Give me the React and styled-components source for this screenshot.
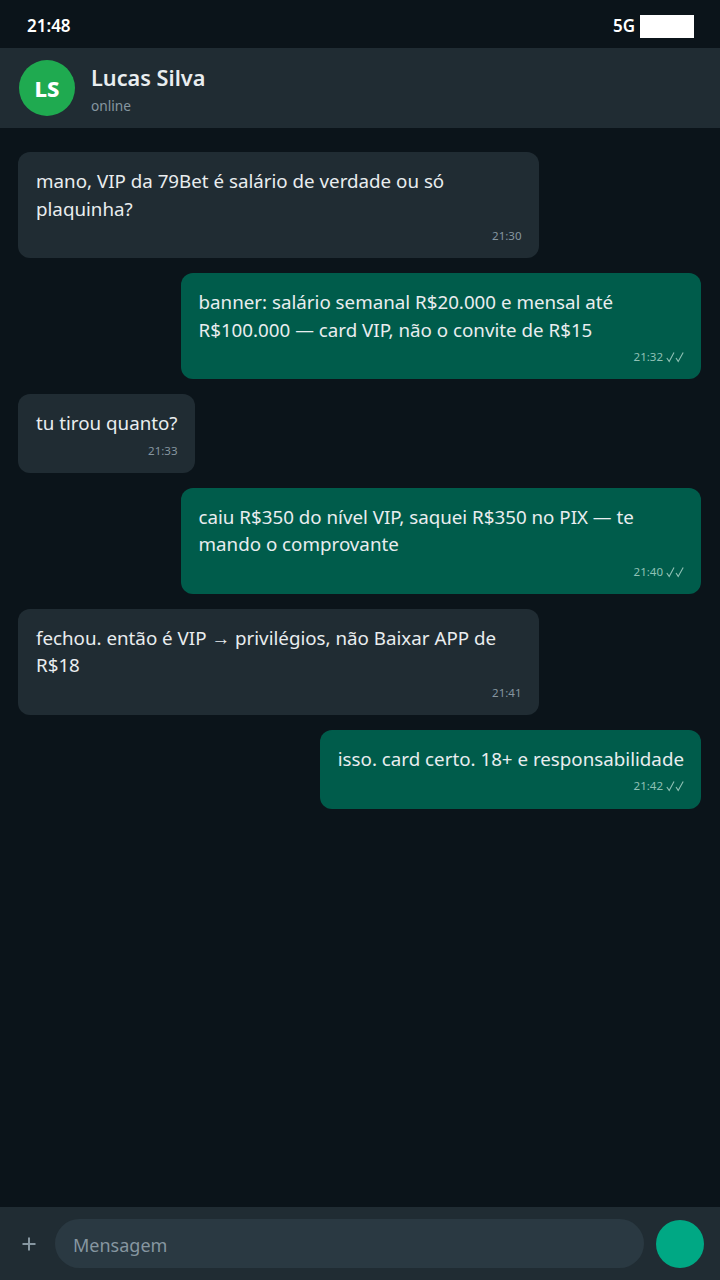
import styled, { createGlobalStyle } from "styled-components";

const Global = createGlobalStyle`
  html, body { margin: 0; padding: 0; background: #0b141a; }
  * { box-sizing: border-box; }
`;

const Screen = styled.div`
  width: 720px;
  height: 1280px;
  display: flex;
  flex-direction: column;
  background: #0b141a;
  color: #e9edef;
  font-family: "Noto Sans", "Open Sans", sans-serif;
  overflow: hidden;
`;

const StatusBar = styled.div`
  height: 48px;
  flex: none;
  display: flex;
  align-items: center;
  justify-content: space-between;
  padding: 3px 26px 0 27px;
  color: #fff;
  font-size: 17px;
  font-weight: 600;
`;

const StatusRight = styled.div`
  display: flex;
  align-items: center;
  gap: 5px;
`;

const Battery = styled.div`
  width: 54px;
  height: 23px;
  margin-top: 1px;
  background: #fff;
`;

const Header = styled.header`
  height: 80px;
  flex: none;
  display: flex;
  align-items: center;
  gap: 16px;
  padding: 0 19px;
  background: #202c33;
`;

const Avatar = styled.div`
  width: 56px;
  height: 56px;
  border-radius: 50%;
  background: #1faa50;
  color: #fff;
  display: flex;
  align-items: center;
  justify-content: center;
  font-size: 22px;
  font-weight: 800;
`;

const Name = styled.div`
  font-size: 21.7px;
  font-weight: 600;
  line-height: 28px;
  margin-top: 2px;
`;

const Presence = styled.div`
  font-size: 13.7px;
  line-height: 19px;
  margin-top: 4px;
  color: #8696a0;
`;

const Messages = styled.main`
  flex: 1;
  display: flex;
  flex-direction: column;
  gap: 14.7px;
  padding: 24px 19px 24px 18px;
`;

const Bubble = styled.div`
  max-width: 520.5px;
  align-self: ${(p) => (p.$out ? "flex-end" : "flex-start")};
  padding: 15px 17px 14.4px 18px;
  border-radius: 12px;
  background: ${(p) => (p.$out ? "#005c4b" : "#202c33")};
`;

const Text = styled.div`
  font-size: 18.75px;
  line-height: 27.5px;
`;

const Meta = styled.div`
  display: flex;
  align-items: center;
  justify-content: flex-end;
  gap: 3px;
  margin-top: 6px;
  font-size: 11.5px;
  line-height: 16px;
  color: ${(p) => (p.$out ? "#8fc1b5" : "#8696a0")};
`;

const Ticks = styled.svg`
  width: 18px;
  height: 12px;
  flex: none;
`;

const Composer = styled.footer`
  height: 73px;
  flex: none;
  display: flex;
  align-items: center;
  gap: 12px;
  padding: 0 16px 0 17px;
  background: #202c33;
`;

const PlusIcon = styled.svg`
  width: 24px;
  height: 24px;
  flex: none;
  margin-right: 2px;
  color: #8696a0;
`;

const Input = styled.div`
  flex: 1;
  height: 49px;
  display: flex;
  align-items: center;
  padding: 2px 18px 0;
  border-radius: 25px;
  background: #2a3942;
  color: #8696a0;
  font-size: 18px;
`;

const Send = styled.div`
  width: 48px;
  height: 48px;
  flex: none;
  border-radius: 50%;
  background: #00a884;
`;

const messages = [
  { text: "mano, VIP da 79Bet é salário de verdade ou só plaquinha?", time: "21:30" },
  { out: true, text: "banner: salário semanal R$20.000 e mensal até R$100.000 — card VIP, não o convite de R$15", time: "21:32" },
  { text: "tu tirou quanto?", time: "21:33" },
  { out: true, text: "caiu R$350 do nível VIP, saquei R$350 no PIX — te mando o comprovante", time: "21:40" },
  { text: "fechou. então é VIP → privilégios, não Baixar APP de R$18", time: "21:41" },
  { out: true, text: "isso. card certo. 18+ e responsabilidade", time: "21:42" },
];

export default function App() {
  return (
    <Screen>
      <Global />
      <StatusBar>
        <span>21:48</span>
        <StatusRight>
          <span>5G</span>
          <Battery />
        </StatusRight>
      </StatusBar>
      <Header>
        <Avatar>LS</Avatar>
        <div>
          <Name>Lucas Silva</Name>
          <Presence>online</Presence>
        </div>
      </Header>
      <Messages>
        {messages.map((m, i) => (
          <Bubble key={i} $out={m.out}>
            <Text>{m.text}</Text>
            <Meta $out={m.out}>
              {m.time}
              {m.out && (
                <Ticks viewBox="0 0 18 12" fill="none" stroke="currentColor" strokeWidth="1.1">
                  <path d="M0.8 7l2.4 3.4L8 1.5M10 7l2.2 3.4L17.2 1.5" />
                </Ticks>
              )}
            </Meta>
          </Bubble>
        ))}
      </Messages>
      <Composer>
        <PlusIcon viewBox="0 0 24 24" fill="none" stroke="currentColor" strokeWidth="2">
          <path d="M12 5.5v13M5.5 12h13" />
        </PlusIcon>
        <Input>Mensagem</Input>
        <Send />
      </Composer>
    </Screen>
  );
}
